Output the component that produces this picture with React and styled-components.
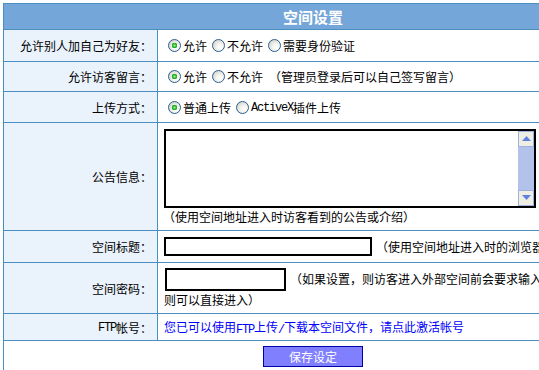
import React from 'react';
import styled, { createGlobalStyle } from 'styled-components';

const Global = createGlobalStyle`
  html, body { margin: 0; padding: 0; overflow: hidden; background: #fff; }
  body {
    padding: 3px;
    font-family: "Noto Sans CJK SC", "Noto Sans", sans-serif;
    font-size: 12px;
    color: #000;
  }
`;

const LINE = '#4a8fc0';

const Panel = styled.div`
  width: 620px;
  box-sizing: border-box;
  border: 1px solid ${LINE};
`;

const Header = styled.div`
  height: 25px;
  display: flex;
  align-items: center;
  justify-content: center;
  background: #74a6d9;
  border-bottom: 1px solid ${LINE};
  color: #fff;
  font-size: 15px;
  font-weight: bold;
`;

const Row = styled.div`
  display: grid;
  grid-template-columns: 154px 1fr;
  min-height: ${(p) => p.h}px;
  border-bottom: 1px solid ${LINE};
`;

const Label = styled.div`
  box-sizing: border-box;
  background: #eaf2fb;
  border-right: 1px solid ${LINE};
  display: flex;
  align-items: center;
  justify-content: flex-end;
  padding-right: 5px;
  white-space: nowrap;
`;

const Value = styled.div`
  display: flex;
  flex-direction: ${(p) => (p.column ? 'column' : 'row')};
  align-items: ${(p) => (p.column ? 'flex-start' : 'center')};
  justify-content: ${(p) => (p.column ? 'center' : 'flex-start')};
  padding: 0 2px 0 5px;
  white-space: ${(p) => (p.wrap ? 'normal' : 'nowrap')};
  min-width: 0;
`;

const Flow = styled.div`
  line-height: 17px;
  padding-left: 1px;
`;

const Option = styled.label`
  display: inline-flex;
  align-items: center;
`;

const Radio = styled.input.attrs({ type: 'radio' })`
  appearance: none;
  -webkit-appearance: none;
  box-sizing: border-box;
  width: 13px;
  height: 13px;
  margin: 0 2px 0 5px;
  border: 1px solid #2a5f91;
  border-radius: 50%;
  background: radial-gradient(circle at 65% 65%, #ffffff 0, #f4f4ef 35%, #d4d4cc 80%);
  &:checked {
    background:
      radial-gradient(circle at 50% 50%, #a6f0a0 0, #3cc43c 1.5px, #1e9a1e 2.6px, rgba(30,154,30,0) 3px),
      radial-gradient(circle at 65% 65%, #ffffff 0, #f4f4ef 35%, #d4d4cc 80%);
  }
`;

const Mono = styled.span`
  font-family: "Liberation Mono", monospace;
  letter-spacing: -1.2px;
  position: relative;
  top: 1px;
`;

const Note = styled.span`
  margin-left: ${(p) => p.gap || 0}px;
`;

const NoticeBox = styled.div`
  width: 372px;
  height: 79px;
  box-sizing: border-box;
  margin-left: 1px;
  border: 2px solid #000;
  display: flex;
`;

const TextArea = styled.textarea`
  flex: 1;
  border: none;
  outline: none;
  resize: none;
  margin: 0;
  padding: 2px;
  background: #fff;
  overflow: hidden;
`;

const ScrollBar = styled.div`
  width: 16px;
  display: flex;
  flex-direction: column;
  background: #b3c2ea;
`;

const ArrowBtn = styled.div`
  width: 16px;
  height: 16px;
  box-sizing: border-box;
  border: 1px solid #9fb1e2;
  background: #efeee3;
  display: flex;
  align-items: center;
  justify-content: center;
`;

const Track = styled.div`
  flex: 1;
`;

const TextInput = styled.input.attrs({ type: 'text' })`
  box-sizing: border-box;
  width: ${(p) => p.w}px;
  height: ${(p) => p.h}px;
  margin: 0 0 0 1px;
  padding: 1px 3px;
  border: 2px solid #000;
  background: #fff;
  outline: none;
  vertical-align: ${(p) => p.valign || 'middle'};
`;

const Link = styled.a`
  color: #0000ff;
  text-decoration: none;
  margin-left: 1px;
`;

const Footer = styled.div`
  display: flex;
  justify-content: center;
  padding: 5px 0 8px;
`;

const SaveButton = styled.button`
  width: 100px;
  height: 21px;
  box-sizing: border-box;
  padding: 0;
  border: 1px solid #0000a8;
  background: #8080ff;
  color: #fff;
  font-family: "Noto Sans CJK SC", sans-serif;
  font-size: 12px;
  line-height: 19px;
`;

const Tri = ({ up }) => (
  <svg width="9" height="5" viewBox="0 0 9 5">
    <polygon points={up ? '0,5 9,5 4.5,0' : '0,0 9,0 4.5,5'} fill="#5f82e0" />
  </svg>
);

export default function App() {
  return (
    <>
      <Global />
      <Panel>
        <Header>空间设置</Header>

        <Row h={31}>
          <Label>允许别人加自己为好友：</Label>
          <Value>
            <Option><Radio name="friend" defaultChecked />允许</Option>
            <Option><Radio name="friend" />不允许</Option>
            <Option><Radio name="friend" />需要身份验证</Option>
          </Value>
        </Row>

        <Row h={29}>
          <Label>允许访客留言：</Label>
          <Value>
            <Option><Radio name="msg" defaultChecked />允许</Option>
            <Option><Radio name="msg" />不允许</Option>
            <Note gap={6}>（管理员登录后可以自己签写留言）</Note>
          </Value>
        </Row>

        <Row h={30}>
          <Label>上传方式：</Label>
          <Value>
            <Option><Radio name="up" defaultChecked />普通上传</Option>
            <Option><Radio name="up" /><Mono>ActiveX</Mono>插件上传</Option>
          </Value>
        </Row>

        <Row h={107}>
          <Label>公告信息：</Label>
          <Value column>
            <NoticeBox>
              <TextArea />
              <ScrollBar>
                <ArrowBtn><Tri up /></ArrowBtn>
                <Track />
                <ArrowBtn><Tri /></ArrowBtn>
              </ScrollBar>
            </NoticeBox>
            <Note>（使用空间地址进入时访客看到的公告或介绍）</Note>
          </Value>
        </Row>

        <Row h={31}>
          <Label>空间标题：</Label>
          <Value>
            <TextInput w={208} h={19} />
            <Note gap={4}>（使用空间地址进入时的浏览器标题）</Note>
          </Value>
        </Row>

        <Row h={50}>
          <Label>空间密码：</Label>
          <Value wrap>
            <Flow>
              <TextInput w={121} h={23} valign="baseline" />
              <Note gap={4}>（如果设置，则访客进入外部空间前会要求输入访问密码，否则可以直接进入）</Note>
            </Flow>
          </Value>
        </Row>

        <Row h={26}>
          <Label><Mono>FTP</Mono>帐号：</Label>
          <Value>
            <Link href="#">您已可以使用<Mono>FTP</Mono>上传<Mono>/</Mono>下载本空间文件，请点此激活帐号</Link>
          </Value>
        </Row>

        <Footer>
          <SaveButton type="button">保存设定</SaveButton>
        </Footer>
      </Panel>
    </>
  );
}
